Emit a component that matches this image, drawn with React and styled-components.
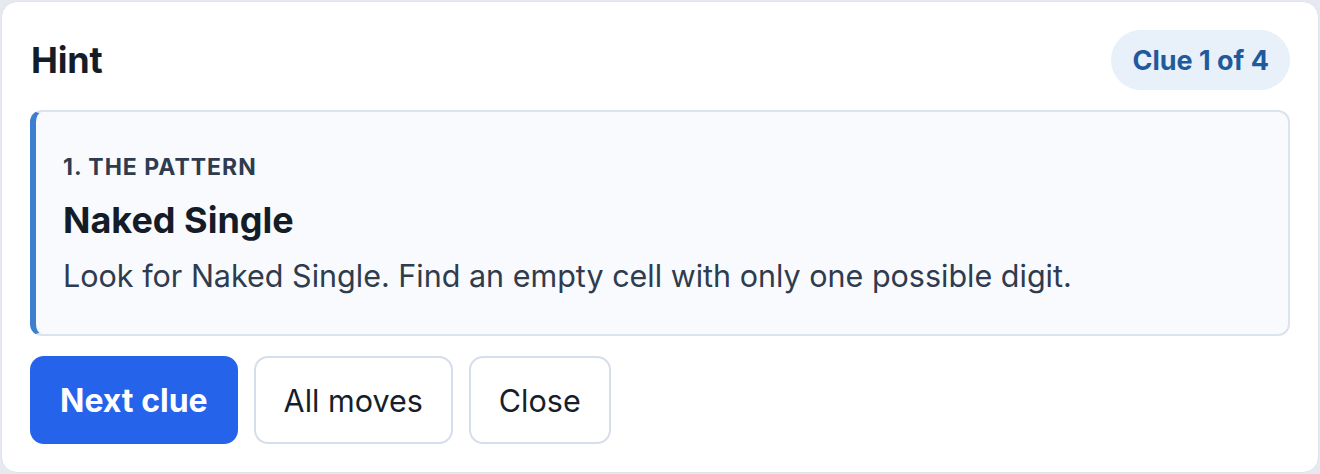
import React from 'react';
import styled, { createGlobalStyle } from 'styled-components';

const GlobalStyle = createGlobalStyle`
  html, body {
    margin: 0;
    padding: 0;
    background: #e6eaf0;
  }
  body {
    font-family: Inter, "Noto Sans", "Liberation Sans", sans-serif;
    -webkit-font-smoothing: antialiased;
  }
`;

const Card = styled.section`
  margin: 1px 1px 0;
  background: #ffffff;
  border: 1px solid #dde3eb;
  border-radius: 16px;
  padding: 28px;
  display: flex;
  flex-direction: column;
  gap: 20px;
`;

const Header = styled.header`
  display: flex;
  align-items: center;
  justify-content: space-between;
  height: 60px;
`;

const Title = styled.h2`
  margin: 0 0 0 1px;
  font-size: 36px;
  font-weight: 700;
  color: #141c28;
  letter-spacing: -0.2px;
`;

const Badge = styled.span`
  display: inline-flex;
  align-items: center;
  height: 60px;
  padding: 0 21px;
  border-radius: 999px;
  background: #e8f0fa;
  color: #1f5a9c;
  font-size: 27px;
  font-weight: 700;
`;

const Step = styled.div`
  background: #f8fafd;
  border: 2px solid #dbe3ee;
  border-left: 6px solid #3d7ecf;
  border-radius: 12px;
  padding: 41px 27px 36px;
`;

const StepLabel = styled.div`
  font-size: 23px;
  line-height: 28px;
  font-weight: 700;
  letter-spacing: 1px;
  text-transform: uppercase;
  color: #2f3c50;
`;

const StepTitle = styled.h3`
  margin: 17px 0 0;
  font-size: 36px;
  line-height: 44px;
  font-weight: 700;
  color: #141c28;
`;

const StepText = styled.p`
  margin: 12px 0 0;
  font-size: 30.5px;
  line-height: 44px;
  color: #2f3b4e;
`;

const Actions = styled.div`
  display: flex;
  gap: 16px;
`;

const Button = styled.button`
  height: 88px;
  padding: 0 28px;
  border-radius: 14px;
  font-family: inherit;
  font-size: ${p => (p.$primary ? '32px' : '30.5px')};
  cursor: pointer;
  border: 2px solid ${p => (p.$primary ? '#2563eb' : '#d5deea')};
  background: ${p => (p.$primary ? '#2563eb' : '#ffffff')};
  color: ${p => (p.$primary ? '#ffffff' : '#161e2b')};
  font-weight: ${p => (p.$primary ? 700 : 400)};
`;

export default function App() {
  return (
    <>
      <GlobalStyle />
      <Card>
        <Header>
          <Title>Hint</Title>
          <Badge>Clue 1 of 4</Badge>
        </Header>
        <Step>
          <StepLabel>1. The pattern</StepLabel>
          <StepTitle>Naked Single</StepTitle>
          <StepText>Look for Naked Single. Find an empty cell with only one possible digit.</StepText>
        </Step>
        <Actions>
          <Button $primary>Next clue</Button>
          <Button>All moves</Button>
          <Button>Close</Button>
        </Actions>
      </Card>
    </>
  );
}
